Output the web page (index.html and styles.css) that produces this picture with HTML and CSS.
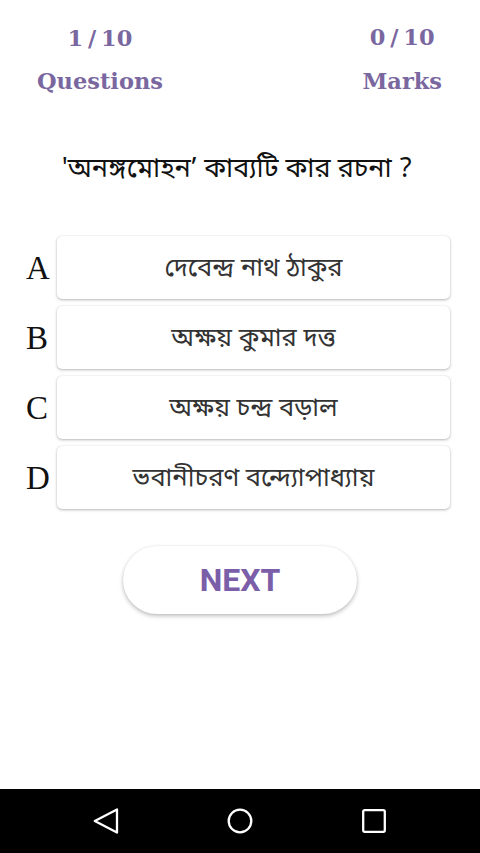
FILE: index.html
```html
<!DOCTYPE html>
<html lang="bn">
<head>
<meta charset="utf-8">
<link rel="stylesheet" href="styles.css">
</head>
<body>
<div class="screen">
  <div class="content">
    <div class="stats">
      <div class="stat stat-left">
        <div class="stat-num">1 / 10</div>
        <div class="stat-label">Questions</div>
      </div>
      <div class="stat stat-right">
        <div class="stat-num">0 / 10</div>
        <div class="stat-label">Marks</div>
      </div>
    </div>
    <div class="question">'অনঙ্গমোহন’ কাব্যটি কার রচনা ?</div>
    <div class="options">
      <div class="option"><span class="letter">A</span><div class="card">দেবেন্দ্র নাথ ঠাকুর</div></div>
      <div class="option"><span class="letter">B</span><div class="card">অক্ষয় কুমার দত্ত</div></div>
      <div class="option"><span class="letter">C</span><div class="card">অক্ষয় চন্দ্র বড়াল</div></div>
      <div class="option"><span class="letter">D</span><div class="card">ভবানীচরণ বন্দ্যোপাধ্যায়</div></div>
    </div>
    <div class="next-wrap"><button class="next">NEXT</button></div>
  </div>
  <div class="navbar">
    <svg class="nav-icon" width="26" height="26" viewBox="0 0 26 26"><path d="M24 1.5 L1.8 13 L24 24.5 Z" fill="none" stroke="#fff" stroke-width="2.3" stroke-linejoin="round"/></svg>
    <svg class="nav-icon" width="26" height="26" viewBox="0 0 26 26"><circle cx="13" cy="13" r="11.3" fill="none" stroke="#fff" stroke-width="2.3"/></svg>
    <svg class="nav-icon" width="26" height="26" viewBox="0 0 26 26"><rect x="2.2" y="2.2" width="21.6" height="21.6" rx="1.5" fill="none" stroke="#fff" stroke-width="2.3"/></svg>
  </div>
</div>
</body>
</html>
```
FILE: styles.css
```css
* { box-sizing: border-box; }
html, body { margin: 0; padding: 0; }
body {
  width: 480px;
  height: 853px;
  background: #fff;
  font-family: "Noto Sans Bengali", "Noto Sans", "Liberation Sans", sans-serif;
  overflow: hidden;
}
.screen {
  height: 853px;
  display: flex;
  flex-direction: column;
}
.content {
  flex: 1;
  display: flex;
  flex-direction: column;
}
.stats {
  display: flex;
  justify-content: space-between;
  padding: 20px 38px 0 37px;
}
.stat {
  display: flex;
  flex-direction: column;
  align-items: center;
  font-family: "DejaVu Serif", "Liberation Serif", serif;
  font-weight: bold;
  color: #7a67a0;
}
.stat-num {
  font-size: 22.5px;
  line-height: 36px;
  word-spacing: -3px;
}
.stat-right .stat-num { margin-top: -1px; margin-bottom: 1px; }
.stat-label {
  font-size: 22.5px;
  line-height: 36px;
  margin-top: 7px;
}
.question {
  margin-top: 53px;
  text-align: center;
  font-size: 27px;
  line-height: 36px;
  color: #111;
  padding-right: 6px;
}
.options {
  margin-top: 48px;
  display: flex;
  flex-direction: column;
  gap: 7px;
  padding-right: 30px;
}
.option {
  display: flex;
  align-items: center;
}
.letter {
  width: 57px;
  padding-left: 26px;
  padding-top: 2px;
  font-family: "Liberation Serif", serif;
  font-size: 33px;
  color: #111;
  flex-shrink: 0;
}
.card {
  flex: 1;
  height: 63px;
  display: flex;
  align-items: center;
  justify-content: center;
  background: #fff;
  border-radius: 5px;
  box-shadow: 0 1px 3px rgba(0,0,0,0.28), 0 0 1px rgba(0,0,0,0.12);
  font-size: 25.5px;
  color: #333;
  padding-top: 4px;
}
.next-wrap {
  display: flex;
  justify-content: center;
  margin-top: 37px;
}
.next {
  width: 234px;
  height: 68px;
  border: none;
  border-radius: 34px;
  background: #fff;
  box-shadow: 0 2px 4px rgba(0,0,0,0.25), 0 0 2px rgba(0,0,0,0.08);
  font-family: Roboto, "Liberation Sans", sans-serif;
  font-weight: bold;
  font-size: 32px;
  color: #7a5ea8;
  padding-bottom: 2px;
}
.navbar {
  height: 64px;
  background: #000;
  display: flex;
  justify-content: space-between;
  align-items: center;
  padding: 0 93.5px 0 92.5px;
}
.nav-icon { display: block; }
```
